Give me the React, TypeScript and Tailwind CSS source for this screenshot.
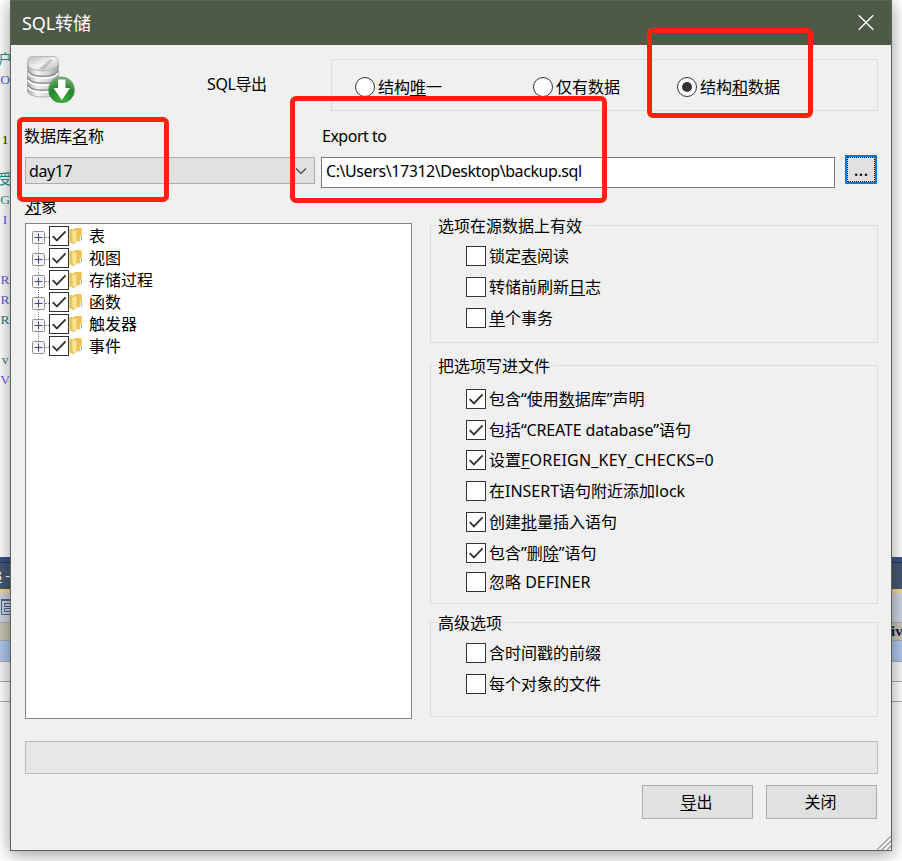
import type { ReactNode } from "react";
import clsx from "clsx";

/* Underlined accelerator character */
const Key = ({ children }: { children: ReactNode }) => (
  <span className="underline decoration-black decoration-1 underline-offset-[2px] [text-decoration-skip-ink:none]">
    {children}
  </span>
);

const Box = ({ checked }: { checked?: boolean }) => (
  <div className="h-5 w-5 shrink-0 border border-[#333] bg-white">
    {checked && (
      <svg className="h-[18px] w-[18px]" viewBox="0 0 18 18" fill="none">
        <path d="M2.7 9.2 L6.9 13.4 L15.6 4.4" stroke="#333" strokeWidth="1.8" />
      </svg>
    )}
  </div>
);

interface OptionProps {
  checked?: boolean;
  className?: string;
  children: ReactNode;
}

const Option = ({ checked, className, children }: OptionProps) => (
  <div className={clsx("flex h-5 items-center whitespace-pre", className)}>
    <Box checked={checked} />
    <span className="ml-[3px] leading-5">{children}</span>
  </div>
);

const Radio = ({ checked, children }: OptionProps) => (
  <div className="flex h-5 items-center whitespace-nowrap">
    <div className="flex h-5 w-5 items-center justify-center rounded-full border border-[#333] bg-white">
      {checked && <div className="h-2.5 w-2.5 rounded-full bg-[#333]" />}
    </div>
    <span className="ml-[3px] leading-5">{children}</span>
  </div>
);

interface GroupProps {
  title: string;
  className: string;
  children: ReactNode;
}

const Group = ({ title, className, children }: GroupProps) => (
  <div className={clsx("border border-[#dcdcdc]", className)}>
    <div className="-mt-[10px] ml-[6px] flex h-5">
      <span className="bg-[#f0f0f0] pr-[3px] pl-px leading-5">{title}</span>
    </div>
    <div className="pl-[35px]">{children}</div>
  </div>
);

const DatabaseIcon = () => (
  <svg className="h-12 w-12" viewBox="0 0 48 48">
    <defs>
      <linearGradient id="metal" x1="0" x2="1">
        <stop offset="0" stopColor="#a6a6a6" />
        <stop offset=".3" stopColor="#f4f4f4" />
        <stop offset=".65" stopColor="#d6d6d6" />
        <stop offset="1" stopColor="#9c9c9c" />
      </linearGradient>
      <linearGradient id="lid" x1="0" y1="0" x2="1" y2="1">
        <stop offset="0" stopColor="#bcbcbc" />
        <stop offset=".5" stopColor="#f3f3f3" />
        <stop offset="1" stopColor="#b4b4b4" />
      </linearGradient>
      <radialGradient id="green" cx=".5" cy=".85" r=".85">
        <stop offset="0" stopColor="#43b13f" />
        <stop offset=".55" stopColor="#23852b" />
        <stop offset="1" stopColor="#7fb07f" />
      </radialGradient>
    </defs>
    <path d="M0.5 7 V35 C0.5 43 31.5 43 31.5 35 V7 Z" fill="url(#metal)" stroke="#b0b0b0" />
    <g fill="none">
      <path d="M1 15 C4 22 28 22 31 15 M1 22 C4 29 28 29 31 22 M1 29 C4 36 28 36 31 29" stroke="#8d8d8d" strokeWidth="1.5" />
      <path d="M1 17 C4 24 28 24 31 17 M1 24 C4 31 28 31 31 24 M1 31 C4 38 28 38 31 31" stroke="#fafafa" strokeWidth="1.8" />
    </g>
    <path d="M0.8 8 C0 1 3 0.6 7 0.6 H25 C30 0.6 32 3 31.2 8 C30 17 2 17 0.8 8 Z" fill="url(#lid)" stroke="#b5b5b5" />
    <path d="M12 13 L23 3 L26 4 L17 14 Z" fill="#a9a9a9" opacity=".6" />
    <circle cx="34.5" cy="33.8" r="13.2" fill="url(#green)" />
    <path d="M31 23.5 H38.5 V32 H43 L34.8 44 L26.5 32 H31 Z" fill="#fff" />
  </svg>
);

const FolderIcon = () => (
  <svg className="mt-[2px] h-4 w-[14px] shrink-0" viewBox="0 0 14 16">
    <path d="M5 1.3 Q5 0 6.5 0 H11.5 Q12.8 0 12.8 1.5 V11.5 L11 13.3 H5 Z" fill="#efc254" />
    <path d="M0.3 0.5 L6 2 V16 L0.3 14.3 Z" fill="#e8c660" />
    <path d="M2.5 3 L8 1.5 V13.3 L3.5 15.8 Z" fill="#fae48d" stroke="#d7b04b" strokeWidth=".5" />
    <path d="M12.4 8.5 V12" stroke="#6bb5bd" />
    <path d="M11.4 8.5 V12" stroke="#fff" />
  </svg>
);

const TREE = ["表", "视图", "存储过程", "函数", "触发器", "事件"];

const TreeRow = ({ name, last }: { name: string; last: boolean }) => (
  <div className="flex h-[22px] pl-[6px]">
    <div className="flex w-[13px] flex-col items-center pt-[5px]">
      <svg className="h-[13px] w-[13px] shrink-0" viewBox="0 0 13 13">
        <rect x=".5" y=".5" width="12" height="12" rx="1" fill="#f5f5f5" stroke="#919191" />
        <path d="M2.5 6.5 H10.5 M6.5 2.5 V10.5" stroke="#354f94" />
      </svg>
      {!last && <div className="h-[9px] shrink-0 border-l border-dotted border-[#888]" />}
    </div>
    <div className="mt-[11px] w-1 border-t border-dotted border-[#888]" />
    <Box checked />
    <FolderIcon />
    <span className="ml-[6px] h-5 leading-5">{name}</span>
  </div>
);

/* Code lines of the editor behind the dialog, cut off by its edge */
const CODE = [
  ["户", "text-[#2a8c8c]"],
  ["O", "text-[#6a5cf0]"],
  ["", ""],
  ["", ""],
  ["1", "text-[#222]"],
  ["", ""],
  ["受", "text-[#2a8c8c]"],
  ["G", "text-[#2a8c8c]"],
  ["I", "text-[#6a5cf0]"],
  ["", ""],
  ["", ""],
  ["R", "text-[#6a5cf0]"],
  ["R", "text-[#6a5cf0]"],
  ["R", "text-[#2a8080]"],
  ["", ""],
  ["v", "text-[#2a8080]"],
  ["V", "text-[#6a5cf0]"],
];

const Backdrop = ({ side }: { side: "left" | "right" }) => (
  <div className="flex h-full w-[10px] shrink-0 flex-col overflow-hidden">
    <div className="h-[557px] shrink-0 pt-[50px]">
      {side === "left" &&
        CODE.map(([text, color], i) => (
          <div
            key={i}
            className={clsx(
              "flex h-5 justify-center font-['Liberation_Serif','Noto_Sans_CJK_SC',serif] text-[13.5px] leading-5",
              color,
            )}
          >
            {text}
          </div>
        ))}
    </div>
    <div className="h-[6px] shrink-0 border-b border-[#22345c] bg-[#3b5382]" />
    <div className="flex h-[26px] shrink-0 justify-between bg-[#475873] text-[14px] leading-[26px] text-white">
      {side === "left" && (
        <>
          <span className="-ml-[6px] underline">3</span>
          <span>-</span>
        </>
      )}
    </div>
    <div className="h-1 shrink-0 bg-[#f4d88e]" />
    <div className="h-[29px] shrink-0 bg-[#ccd3e0] pt-[6px]">
      {side === "left" && (
        <svg className="h-4 w-[10px]" viewBox="0 0 10 16">
          <path d="M10 .8 H1.5 V15.5 H10" fill="none" stroke="#4b6391" />
          <path d="M1 1 H10" stroke="#4b6391" strokeWidth="2" />
          <path d="M10 4.5 H4.5 V7.5 H10 M10 9.5 H4.5 V12.5 H10" fill="none" stroke="#3d5d93" />
        </svg>
      )}
    </div>
    <div className="h-[19px] shrink-0 border-y border-[#aaa] bg-[#c8c4b6] font-['Liberation_Serif',serif] text-[15px] leading-4 text-[#102050]">
      {side === "right" && <span className="-ml-[1px] font-bold">iv</span>}
    </div>
    <div className="h-[21px] shrink-0 border-b border-[#aaa] bg-[#aec6ee]" />
    <div className="h-[20px] shrink-0 border-b border-[#aaa] bg-[#f7f7f7]" />
    <div className="h-[20px] shrink-0 border-b border-[#aaa]" />
  </div>
);

const Button = ({ children }: { children: ReactNode }) => (
  <div className="flex h-[34px] w-[111px] items-center justify-center border border-[#adadad] bg-[#e1e1e1] pr-[2px]">
    {children}
  </div>
);

const Mark = ({ className }: { className: string }) => (
  <div className={clsx("absolute z-20 rounded-[6px] border-[5px] border-[#ff2012]", className)} />
);

export default function App() {
  return (
    <div className="relative flex h-[861px] w-[902px] overflow-hidden bg-white font-['Noto_Sans','Noto_Sans_CJK_SC',sans-serif] text-[16px] text-black">
      <Backdrop side="left" />

      <div className="relative z-10 flex h-[851px] w-[882px] shrink-0 flex-col border border-[#596555] bg-[#f0f0f0] shadow-[0_3px_16px_rgba(0,0,0,0.42)]">
        {/* Title bar */}
        <div className="flex h-11 shrink-0 items-center justify-between bg-[#4e5a47] pr-[17px] pl-[11px] text-white">
          <span className="text-[18px] leading-6 tracking-[-0.1px]">SQL转储</span>
          <svg className="h-4 w-4" viewBox="0 0 16 16">
            <path d="M.7 .2 L15.3 14.8 M15.3 .2 L.7 14.8" stroke="#fff" strokeWidth="1.3" />
          </svg>
        </div>

        {/* Export type */}
        <div className="flex h-[67px] shrink-0 pr-[13px] pl-4">
          <div className="w-[180px] pt-[11px]">
            <DatabaseIcon />
          </div>
          <span className="w-[124px] pt-[29px] leading-5 tracking-[-0.4px]">SQL导出</span>
          <div className="mt-[14px] flex h-[52px] w-[547px] border border-[#dcdcdc] pt-[17px] pl-[23px]">
            <div className="w-[178px]">
              <Radio>
                结构<Key>唯</Key>一
              </Radio>
            </div>
            <div className="w-[144px]">
              <Radio>仅有数据</Radio>
            </div>
            <Radio checked>
              结构<Key>和</Key>数据
            </Radio>
          </div>
        </div>

        {/* Database and target file */}
        <div className="flex h-[84px] shrink-0 pr-[14px] pl-[14px]">
          <div className="w-[296px] pt-[14px]">
            <div className="-ml-px h-[31px] leading-5">
              数据库<Key>名</Key>称
            </div>
            <div className="flex h-[27px] w-[290px] items-center justify-between border border-[#adadad] bg-[#e1e1e1] pr-[7px] pl-[3px]">
              <span className="pt-px text-[16px] tracking-[-0.4px]">day17</span>
              <svg className="h-3 w-3" viewBox="0 0 12 12" fill="none">
                <path d="M1 3.5 L6 8.5 L11 3.5" stroke="#444" strokeWidth="1.2" />
              </svg>
            </div>
          </div>
          <div className="w-[524px] pt-[14px]">
            <div className="h-[31px] pl-px leading-5 tracking-[-0.5px]">Export to</div>
            <div className="h-[31px] w-[514px] border border-[#7a7a7a] bg-white pl-1 leading-[26px] tracking-[-0.42px]">
              C:\Users\17312\Desktop\backup.sql
            </div>
          </div>
          <div className="mt-[43px] h-[29px] w-8 border-2 border-[#0078d7] bg-[#e1e1e1]">
            <div className="h-full border border-dotted border-black text-center text-[18px] leading-[23px]">...</div>
          </div>
        </div>

        {/* Objects and options */}
        <div className="flex h-[523px] shrink-0 pl-[14px]">
          <div className="w-[405px]">
            <div className="h-[27px] leading-5">
              <Key>对</Key>象
            </div>
            <div className="h-[496px] w-[387px] border border-[#828790] bg-white pt-[2px]">
              {TREE.map((name, i) => (
                <TreeRow key={name} name={name} last={i === TREE.length - 1} />
              ))}
            </div>
          </div>

          <div className="w-[448px] pt-[29px]">
            <Group title="选项在源数据上有效" className="h-[118px]">
              <Option className="mt-[10px]">
                锁定<Key>表</Key>阅读
              </Option>
              <Option className="mt-[11px]">
                转储前刷新<Key>日</Key>志
              </Option>
              <Option className="mt-[11px]">
                <Key>单</Key>个事务
              </Option>
            </Group>

            <Group title="把选项写进文件" className="mt-[22px] h-[239px]">
              <Option checked className="mt-[13px]">
                包含“使用<Key>数</Key>据库”声明
              </Option>
              <Option checked className="mt-[11px]">
                包括<span className="tracking-[-0.15px]">“CREATE database”</span>语句
              </Option>
              <Option checked className="mt-[10px]">
                设置
                <span className="tracking-[0.2px]">
                  <Key>F</Key>OREIGN_KEY_CHECKS=0
                </span>
              </Option>
              <Option className="mt-[11px]">在INSERT语句附近添加lock</Option>
              <Option checked className="mt-[11px]">
                创建<Key>批</Key>量插入语句
              </Option>
              <Option checked className="mt-[11px]">
                包含”删<Key>除</Key>”语句
              </Option>
              <Option className="mt-[9px]">忽略 DEFINER</Option>
            </Group>

            <Group title="高级选项" className="mt-[18px] h-[95px]">
              <Option className="mt-[10px]">含时间戳的前缀</Option>
              <Option className="mt-[11px]">每个对象的文件</Option>
            </Group>
          </div>
        </div>

        {/* Progress bar */}
        <div className="mt-[22px] mr-[13px] ml-[14px] h-[33px] shrink-0 border border-[#bcbcbc] bg-[#e6e6e6]" />

        <div className="mt-[11px] mr-[14px] flex justify-end gap-[13px]">
          <Button>
            <span>
              <Key>导</Key>出
            </span>
          </Button>
          <Button>关闭</Button>
        </div>

        {/* Resize grip */}
        <svg className="absolute right-0 bottom-0 h-[14px] w-[14px]" viewBox="0 0 14 14">
          <path d="M1 15 L15 1 M6 15 L15 6 M11 15 L15 11" stroke="#fff" strokeWidth="1.5" />
          <path d="M0 14 L14 0 M5 14 L14 5 M10 14 L14 10" stroke="#999" strokeWidth="1.3" />
        </svg>
      </div>

      <Backdrop side="right" />

      <Mark className="top-[117px] left-[17px] h-[85px] w-[152px]" />
      <Mark className="top-[96px] left-[290px] h-[107px] w-[317px]" />
      <Mark className="top-[28px] left-[647px] h-[90px] w-[166px]" />
    </div>
  );
}
